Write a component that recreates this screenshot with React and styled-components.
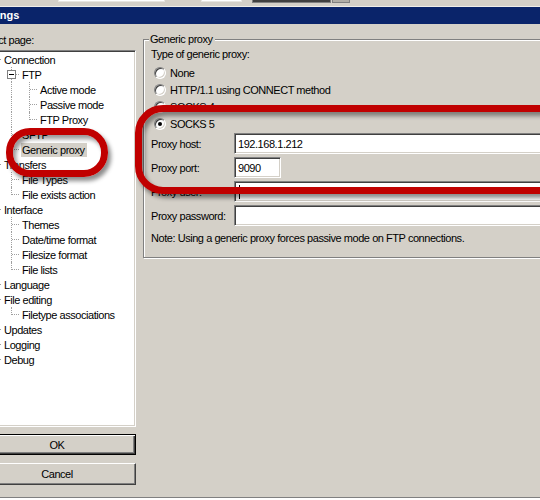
import React from 'react';
import styled, { createGlobalStyle } from 'styled-components';

const GlobalStyle = createGlobalStyle`
    html, body {
        margin: 0;
        padding: 0;
        background: #d4d0c8;
        overflow: hidden;
    }
    body {
        font-family: "Liberation Sans", Arial, sans-serif;
        font-size: 11px;
        letter-spacing: -0.45px;
        color: #000;
    }
`

const Page = styled.div`
    position: relative;
    width: 540px;
    height: 500px;
    overflow: hidden;
    display: flex;
    flex-direction: column;
    background: #d4d0c8;
`

const TopStrip = styled.div`
    height: 6px;
    display: flex;
    align-items: flex-start;
    border-bottom: 1px solid #f0eee8;
`

const StripPiece = styled.div`
    flex: none;
    width: ${p => p.$w}px;
    margin-left: ${p => p.$ml}px;
    height: ${p => p.$dark ? 2 : 1}px;
    background: ${p => p.$bg};
    border: 1px solid ${p => p.$dark ? '#808080' : '#e8e6e0'};
    border-top: none;
`

const TitleBar = styled.div`
    height: 17px;
    line-height: 17px;
    background: #0a246a;
    color: #fff;
    font-weight: bold;
    letter-spacing: 0;
    white-space: nowrap;
    span {
        margin-left: -24px;
    }
`

const Body = styled.div`
    flex: 1;
    display: flex;
    min-height: 0;
`

const LeftCol = styled.div`
    flex: none;
    width: 158px;
    margin-left: -22px;
    display: flex;
    flex-direction: column;
`

const PageLabel = styled.div`
    margin-top: 10px;
    line-height: 13px;
    white-space: nowrap;
`

const TreeBox = styled.div`
    margin: 3px 0 0 10px;
    height: 377px;
    box-sizing: border-box;
    background: #fff;
    border: 1px solid;
    border-color: #808080 #fff #fff #808080;
    box-shadow: inset 1px 1px 0 #404040, inset -1px -1px 0 #d4d0c8;
    padding: 1px 0 0 2px;
    overflow: hidden;
`

const TreeRow = styled.div`
    display: flex;
    align-items: center;
    height: 15px;
    white-space: nowrap;
`

const Guide = styled.span`
    flex: none;
    position: relative;
    width: 18px;
    height: 15px;
    &::before {
        content: '';
        display: ${p => p.$on ? 'block' : 'none'};
        position: absolute;
        left: 2px;
        top: 0;
        height: 15px;
        border-left: 1px dotted #a0a0a0;
    }
`

const Connector = styled.span`
    flex: none;
    position: relative;
    width: 12px;
    height: 15px;
    &::before {
        content: '';
        position: absolute;
        left: 2px;
        top: 0;
        height: ${p => p.$last ? 8 : 15}px;
        border-left: 1px dotted #a0a0a0;
    }
    &::after {
        content: '';
        position: absolute;
        left: 3px;
        top: 7px;
        width: 7px;
        border-top: 1px dotted #a0a0a0;
    }
`

const Expander = styled.span`
    position: absolute;
    z-index: 1;
    left: -2px;
    top: 3px;
    width: 7px;
    height: 7px;
    background: #fff;
    border: 1px solid #808080;
    &::after {
        content: '';
        position: absolute;
        left: 1px;
        top: 3px;
        width: 5px;
        height: 1px;
        background: #000;
    }
`

const TreeLabel = styled.span`
    padding: 0 2px 0 1px;
    line-height: 14px;
    background: ${p => p.$selected ? '#d4d0c8' : 'transparent'};
`

const Button = styled.div`
    height: ${p => p.$h}px;
    margin-top: ${p => p.$mt}px;
    box-sizing: border-box;
    display: flex;
    align-items: center;
    justify-content: center;
    background: #d4d0c8;
    border: 1px solid;
    border-color: ${p => p.$default ? '#000' : '#fff #404040 #404040 #fff'};
    box-shadow: ${p => p.$default
        ? 'inset 1px 1px 0 #fff, inset -1px -1px 0 #404040, inset -2px -2px 0 #808080'
        : 'inset -1px -1px 0 #808080'};
`

const RightCol = styled.div`
    flex: 1;
    margin-left: 7px;
    min-width: 0;
`

const GroupBox = styled.fieldset`
    width: 440px;
    margin: 9px 0 0 0;
    padding: 0 0 12px 7px;
    border: 1px solid #808080;
    box-shadow: inset 1px 1px 0 #fff, 1px 1px 0 #fff;
    legend {
        padding: 0 2px 0 1px;
        margin-left: -2px;
        line-height: 13px;
        background: #d4d0c8;
    }
`

const TypeLabel = styled.div`
    margin-top: 2px;
    line-height: 13px;
`

const RadioList = styled.div`
    margin-top: 3px;
    display: flex;
    flex-direction: column;
`

const RadioRow = styled.div`
    height: 17px;
    display: flex;
    align-items: center;
    gap: 4px;
    white-space: nowrap;
`

const RadioDot = styled.span`
    flex: none;
    position: relative;
    width: 12px;
    height: 12px;
    box-sizing: border-box;
    margin-left: 3px;
    border-radius: 50%;
    background: #fff;
    border: 1px solid;
    border-color: #808080 #fff #fff #808080;
    box-shadow: inset 1px 1px 0 #404040, inset -1px -1px 0 #d4d0c8;
    &::after {
        content: '';
        display: ${p => p.$checked ? 'block' : 'none'};
        position: absolute;
        left: 3px;
        top: 3px;
        width: 4px;
        height: 4px;
        border-radius: 50%;
        background: #000;
    }
`

const FormGrid = styled.div`
    margin-top: 1px;
    margin-right: 8px;
    display: grid;
    grid-template-columns: 83px 1fr;
    row-gap: 3px;
    align-items: center;
`

const FieldLabel = styled.div`
    white-space: nowrap;
`

const Field = styled.div`
    width: ${p => p.$w ? `${p.$w}px` : 'auto'};
    height: 21px;
    box-sizing: border-box;
    display: flex;
    align-items: center;
    padding-left: 3px;
    background: #fff;
    border: 1px solid;
    border-color: #808080 #fff #fff #808080;
    box-shadow: inset 1px 1px 0 #404040, inset -1px -1px 0 #d4d0c8;
`

const Caret = styled.span`
    width: 1px;
    height: 14px;
    margin-left: 1px;
    background: #000;
`

const Note = styled.div`
    margin-top: 6px;
    line-height: 13px;
    white-space: nowrap;
`

const BottomEdge = styled.div`
    flex: none;
    height: 2px;
    border-top: 1px solid #808080;
    background: #fff;
`

const Annotation = styled.div`
    position: absolute;
    left: ${p => p.$x}px;
    top: ${p => p.$y}px;
    width: ${p => p.$w}px;
    height: ${p => p.$h}px;
    box-sizing: border-box;
    border: 7px solid #c00000;
    border-radius: ${p => p.$r}px;
    box-shadow: 3px 4px 4px rgba(0, 0, 0, 0.45), inset 3px 4px 4px rgba(0, 0, 0, 0.4);
    pointer-events: none;
`

const TREE = [
    { label: 'Connection', level: 0, guides: [] },
    { label: 'FTP', level: 1, guides: [true], open: true },
    { label: 'Active mode', level: 2, guides: [true, true] },
    { label: 'Passive mode', level: 2, guides: [true, true] },
    { label: 'FTP Proxy', level: 2, guides: [true, true], last: true },
    { label: 'SFTP', level: 1, guides: [true] },
    { label: 'Generic proxy', level: 1, guides: [true], last: true, selected: true },
    { label: 'Transfers', level: 0, guides: [] },
    { label: 'File Types', level: 1, guides: [true] },
    { label: 'File exists action', level: 1, guides: [true], last: true },
    { label: 'Interface', level: 0, guides: [] },
    { label: 'Themes', level: 1, guides: [true] },
    { label: 'Date/time format', level: 1, guides: [true] },
    { label: 'Filesize format', level: 1, guides: [true] },
    { label: 'File lists', level: 1, guides: [true], last: true },
    { label: 'Language', level: 0, guides: [] },
    { label: 'File editing', level: 0, guides: [] },
    { label: 'Filetype associations', level: 1, guides: [true], last: true },
    { label: 'Updates', level: 0, guides: [] },
    { label: 'Logging', level: 0, guides: [] },
    { label: 'Debug', level: 0, guides: [], last: true },
];

const RADIOS = [
    { label: 'None' },
    { label: 'HTTP/1.1 using CONNECT method' },
    { label: 'SOCKS 4' },
    { label: 'SOCKS 5', checked: true },
];

const App = () => {
    return (
        <Page>
            <GlobalStyle />
            <TopStrip>
                <StripPiece $ml={58} $w={105} $bg="#fff" />
                <StripPiece $ml={36} $w={39} $bg="#fff" />
                <StripPiece $ml={10} $w={77} $bg="#404040" $dark />
                <StripPiece $ml={1} $w={16} $bg="#b0ada6" $dark />
            </TopStrip>
            <TitleBar><span>Settings</span></TitleBar>
            <Body>
                <LeftCol>
                    <PageLabel>Select page:</PageLabel>
                    <TreeBox>
                        {TREE.map(item => (
                            <TreeRow key={item.label}>
                                {item.guides.map((on, i) => <Guide key={i} $on={on} />)}
                                <Connector $last={item.last}>
                                    {item.open && <Expander />}
                                </Connector>
                                <TreeLabel $selected={item.selected}>{item.label}</TreeLabel>
                            </TreeRow>
                        ))}
                    </TreeBox>
                    <Button $default $h={21} $mt={7}>OK</Button>
                    <Button $h={22} $mt={8}>Cancel</Button>
                </LeftCol>
                <RightCol>
                    <GroupBox>
                        <legend>Generic proxy</legend>
                        <TypeLabel>Type of generic proxy:</TypeLabel>
                        <RadioList>
                            {RADIOS.map(r => (
                                <RadioRow key={r.label}>
                                    <RadioDot $checked={r.checked} />
                                    {r.label}
                                </RadioRow>
                            ))}
                        </RadioList>
                        <FormGrid>
                            <FieldLabel>Proxy host:</FieldLabel>
                            <Field>192.168.1.212</Field>
                            <FieldLabel>Proxy port:</FieldLabel>
                            <Field $w={47}>9090</Field>
                            <FieldLabel>Proxy user:</FieldLabel>
                            <Field><Caret /></Field>
                            <FieldLabel>Proxy password:</FieldLabel>
                            <Field />
                        </FormGrid>
                        <Note>Note: Using a generic proxy forces passive mode on FTP connections.</Note>
                    </GroupBox>
                </RightCol>
            </Body>
            <BottomEdge />
            <Annotation $x={6} $y={128} $w={102} $h={49} $r={24} />
            <Annotation $x={135} $y={105} $w={480} $h={89} $r={28} />
        </Page>
    );
};

export default App;
